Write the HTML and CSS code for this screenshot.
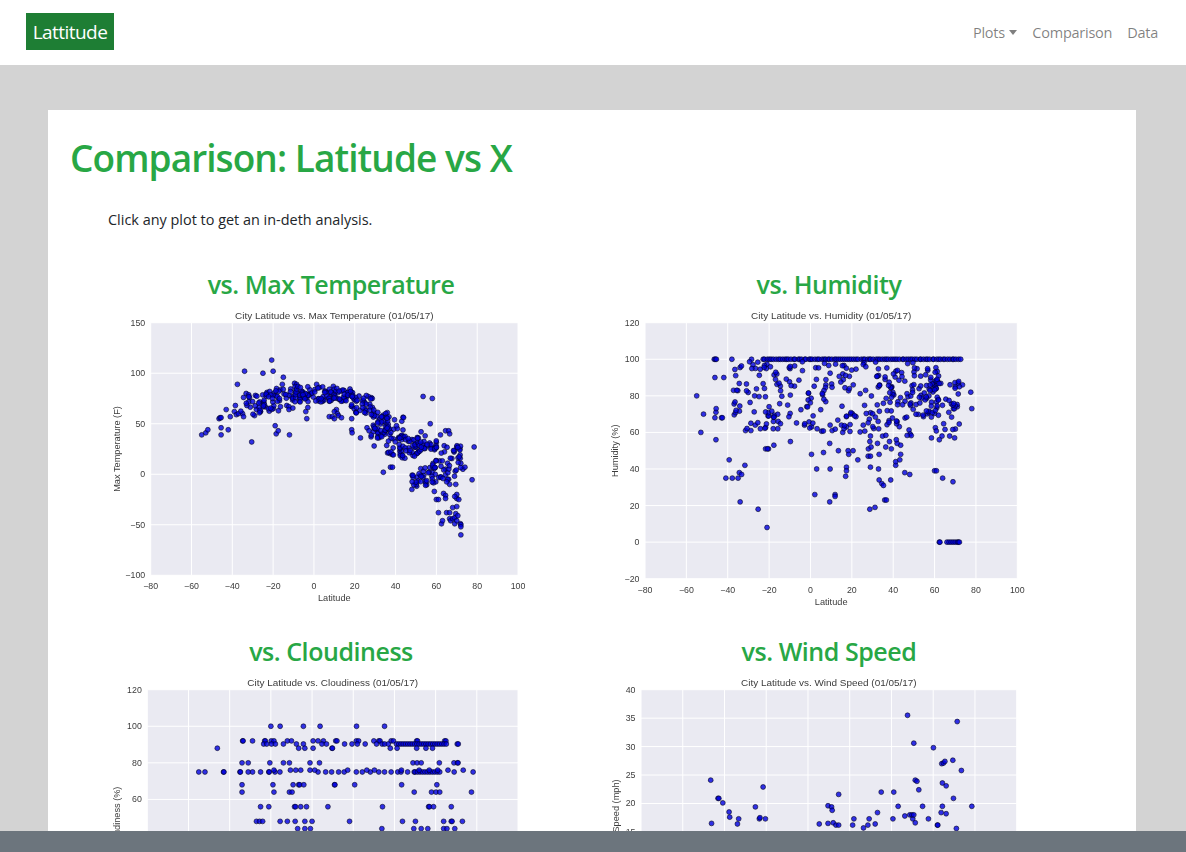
FILE: index.html
```html
<!DOCTYPE html>
<html lang="en">
<head>
    <meta charset="UTF-8">
    <meta name="viewport" content="width=device-width, initial-scale=1.0">
    <title>Lattitude</title>
    <link rel="stylesheet" href="styles.css">
</head>
<body>

<nav class="navbar">
    <a class="brand" href="#">Lattitude</a>
    <ul class="nav-links">
        <li><a href="#">Plots<span class="caret"></span></a></li>
        <li><a href="#">Comparison</a></li>
        <li><a href="#">Data</a></li>
    </ul>
</nav>

<main class="page">
    <div class="card">
        <h1>Comparison: Latitude vs X</h1>
        <p class="lead">Click any plot to get an in-deth analysis.</p>
        <div class="plots">
            <section class="plot-cell">
                <h2>vs. Max Temperature</h2>
                <svg class="plot" id="plotTemp" width="498" height="298"></svg>
            </section>
            <section class="plot-cell">
                <h2>vs. Humidity</h2>
                <svg class="plot" id="plotHumidity" width="498" height="298"></svg>
            </section>
            <section class="plot-cell">
                <h2>vs. Cloudiness</h2>
                <svg class="plot" id="plotCloud" width="498" height="298"></svg>
            </section>
            <section class="plot-cell">
                <h2>vs. Wind Speed</h2>
                <svg class="plot" id="plotWind" width="498" height="298"></svg>
            </section>
        </div>
    </div>
</main>

<footer class="footer"></footer>

<script src="plots.js"></script>
</body>
</html>
```

FILE: styles.css
```css
html, body {
    height: 100%;
}
body {
    margin: 0;
    height: 100vh;
    display: flex;
    flex-direction: column;
    overflow: hidden;
    background-color: #d3d3d3;
    font-family: "Open Sans", "Noto Sans", sans-serif;
    color: #212529;
}
.navbar {
    flex: none;
    height: 65px;
    display: flex;
    align-items: flex-start;
    justify-content: space-between;
    padding: 13px 28px 0 26px;
    box-sizing: border-box;
    background: white;
}
.brand {
    height: 37px;
    width: 88px;
    display: flex;
    align-items: center;
    justify-content: center;
    background-color: #1e7e34;
    color: white;
    font-size: 19px;
    letter-spacing: -0.55px;
    text-decoration: none;
}
.nav-links {
    display: flex;
    gap: 15px;
    list-style: none;
    margin: 0;
    padding: 0;
    height: 37px;
    align-items: center;
}
.nav-links a {
    color: rgba(0,0,0,0.5);
    font-size: 14.5px;
    letter-spacing: -0.25px;
    text-decoration: none;
}
.caret {
    display: inline-block;
    margin-left: 4.5px;
    vertical-align: 3px;
    border-top: 5px solid rgba(0,0,0,0.5);
    border-left: 4.5px solid transparent;
    border-right: 4.5px solid transparent;
}
.page {
    flex: 1;
    min-height: 0;
    overflow: hidden;
    padding: 45px 50px 0 48px;
}
.card {
    background: white;
    padding: 24px 0 0 0;
    min-height: 100%;
}
h1 {
    margin: 0 0 26px 22px;
    font-size: 37px;
    line-height: 48px;
    font-weight: 600;
    letter-spacing: -0.93px;
    color: #28a745;
}
.lead {
    margin: 0 0 36px 60px;
    font-size: 14.45px;
    line-height: 24px;
}
.plots {
    display: grid;
    grid-template-columns: 498px 498px;
    grid-auto-rows: 367px;
    margin-left: 34px;
}
.plot-cell {
    text-align: center;
}
h2 {
    margin: 0 0 8px 0;
    font-size: 25px;
    line-height: 32px;
    font-weight: 600;
    letter-spacing: -0.45px;
    color: #28a745;
}
.plot {
    display: block;
    filter: blur(0.4px);
    font-family: "Liberation Sans", Arial, sans-serif;
}
.plot .bg {
    fill: #eaeaf2;
}
.plot .grid {
    stroke: white;
    stroke-width: 1;
}
.plot .tick {
    font-size: 8.8px;
    fill: #3c3c3c;
}
.plot .title {
    font-size: 9.95px;
    fill: #3c3c3c;
    text-anchor: middle;
}
.plot .axis-label {
    font-size: 9.2px;
    fill: #3c3c3c;
    text-anchor: middle;
}
.plot .dot {
    fill: rgba(0,0,225,0.8);
    stroke: rgba(0,0,30,0.85);
    stroke-width: 0.7;
}
.footer {
    flex: none;
    height: 21px;
    background-color: #6c757d;
}
```

FILE: plots.js
```js
// small seeded random so the dense parts of the clouds always come out the same
let seed = 41;
function rnd(a, b) {
    seed = (seed * 1664525 + 1013904223) % 4294967296;
    return a + (seed / 4294967296) * (b - a);
}

function band(latMin, latMax, valMin, valMax, n) {
    let out = [];
    for (let i = 0; i < n; i++) {
        out.push([rnd(latMin, latMax), rnd(valMin, valMax)]);
    }
    return out;
}

function rows(list) {
    let out = [];
    list.forEach(r => r[1].forEach(lat => out.push([lat, r[0]])));
    return out;
}

function range(from, to, step) {
    let out = [];
    for (let v = from; v <= to + 0.001; v += step) out.push(v);
    return out;
}

const tempPoints = [
    [-55,39],[-53,41],[-52,44],[-46.5,55],[-46,56],[-45.5,56],[-45.5,46],[-45.5,39],[-43,64],[-42,44],[-41,57],[-39,62],
    [-38.5,68],[-38,59],[-37.5,89],[-37,60],[-35,60],[-34.5,76],[-34.5,57],[-34,102],[-20.7,113],[-25,100],[-20,102],
    [-15,96],[-15.5,89],[-9.5,90],[-8.5,89],[1.3,89],[9.5,87],[-30.5,32],[-19,48],[-18.5,40],[-17.5,43],[-12,39],
    [-3.5,55],[-3,66],[-4,62],[7.5,57],[9,57],[10,55],[11,64],[10,62],[11.5,60],[12,58],[13.5,56],[18.5,55],[18.5,44],
    [18.7,41],[22.8,36],[26,46],[27,43],[28,37],[29.5,28],[34,2],[37.5,7],[38.5,7],[48,-15],[53.5,77],[58,75],[57,50],
    [52.5,42],[54.5,38],[62,39],[64.5,43],[66,43],[66.5,40],[78.5,27],[77.5,-5.5],[73,5],[74,7],[59,-17],[60,-25],
    [61,-25],[61,-38],[62.5,-49],[63,-46],[63.5,-19],[64.5,-21],[64.5,-24],[65,-38],[66.5,-38],[66.5,-44],[67,-46],
    [68,-33],[68,-44],[69,-43],[69,-49],[69.5,-39],[70,-46],[70,-32],[70,-20],[69.5,-10],[70,-24],[71,-25],[70.5,-41],
    [71.8,-49],[72,-50],[72,-52],[72,-60],[69,-22],[66.5,-10],[66,-5],[70,27],[71.5,25],[71.5,24]
].concat(
    band(-36, -25, 58, 80, 24),
    band(-25, -10, 62, 85, 50),
    band(-10, 5, 70, 87, 56),
    band(5, 20, 72, 85, 52),
    band(18, 30, 60, 78, 38),
    band(28, 36, 34, 62, 44),
    band(35, 44, 18, 58, 46),
    band(42, 52, 15, 38, 36),
    band(50, 60, 22, 34, 22),
    band(48, 60, -12, 8, 36),
    band(58, 72, -8, 12, 24),
    band(59, 72, 12, 30, 22)
);

const topRow = range(-23, 73, 1.05).map(lat => [lat + rnd(-0.4, 0.4), 100]);

const humidityPoints = [
    [-55,80],[-53,60],[-51.7,70],[-46.5,100],[-46,100],[-45.5,100],[-38,100],[-28.5,100],[-46.2,68],[-45.7,71],[-45.6,73],
    [-46.2,90],[-45.7,56],[-41.9,90],[-43,68],[-42.6,68],[-39.3,45],[-40.9,35],[-37.8,35],[-35,35],[-34.4,38],[-33.3,37],
    [-34,22],[-31.7,42],[-25.3,18],[-21,8],[-31.4,61],[-28.8,61],[-28.8,65],[-26.7,64],[-21.7,51],[-20.3,51],[-20.8,51],
    [-17.7,53],[-9.7,55],[-20.5,69],[-20.2,69],[-17.9,66],[-15.6,66],[-18,62],[-15.8,62],[0.5,48],[3,40],[2.1,26],[6.3,49],
    [9.5,40],[9.3,22],[11.9,26],[11.9,25],[13.5,50],[17,36],[17.4,41],[17.4,39],[18.2,50],[18.5,48],[20.6,50],[22.9,45],
    [9.3,54],[3.2,62],[9.5,64],[10.5,61],[15,64],[15.6,60],[17.4,63],[28.7,18],[31.2,19],[29,41],[32.9,40],[33.2,34],
    [34.5,32],[35.3,31],[35.9,23],[36.7,23],[38.8,34],[41.2,42],[41.2,44],[43.2,45],[43.6,48],[43.6,53],[45.6,38],[48,37],
    [27.9,47],[29,47],[28,51],[29.3,52],[28.7,55],[29,58],[32.4,54],[33.2,48],[36.4,52],[38.2,55],[39.1,51],[41.9,54],
    [41.5,56],[60,39],[60.9,39],[63.9,35],[68.9,33],[63.6,58],[62.3,56],[67.3,58],[69.7,57],[58.5,57],[77.5,82],[78,73],
    [73.5,86],[70,85],[72,85],[71,74],[62.3,0],[62.6,0],[66,0],[67,0],[68,0],[69,0],[70,0],[71,0],[71.5,0],[72,0]
].concat(
    topRow,
    band(-38, -20, 62, 99, 46),
    band(-20, 10, 60, 99, 66),
    band(10, 30, 60, 99, 46),
    band(30, 50, 56, 99, 70),
    band(48, 62, 68, 96, 66),
    band(60, 72, 60, 92, 34)
);

const denseNinety = range(41, 66, 1.1);
const denseSeventyFive = range(50, 63, 1.2);

const cloudPoints = rows([
    [100, [-20,-15.5,-4.2,3.9,21.6,35.2]],
    [92, [-33.7,-33.5,-28.9,-23,-22.7,-19.8,-18.5,-12,-10,0.5,2.9,5.5,11.5,12.1,21.5,22.6,30,32.4,33,38.4,39.5,50.8,51.2,64.4,65]],
    [90.3, [-23.5,-22,-19.7,-17.8,-13.9,-7.6,-4.2,4.8,7,15.8,19.4,22,25.8,31.3,34,35.2,37,70.5,71].concat(denseNinety)],
    [88, [-46,-6.5,-3.5,0.5,9.7,9.9,38,41.3,50.8,55.3,58.5]],
    [80, [-34,-31,-20.5,-13.9,-11,-1,3.6,49,51,53,61.8,68.9,70.6,70.9]],
    [75, [-55,-52,-43,-42.8,-35,-34.8,-31,-28.9,-25,-21,-20.8,-18,-15.6,2.9,6.6,9.5,12.9,15.6,21.5,24.4,28.3,32.4,35.2,38.4,41.6,43.2,46.4,49.6,69,78.2].concat(denseSeventyFive)],
    [76, [-18.5,-10.5,-7.9,-5.5,-1,1.3,17.3,26.6,30.3,43.4,52,56.9,61,66,73.4]],
    [68, [-34,-19,-9.2,-6.5,-6,-4,10.9,11.1,20.7,43.5,60.6]],
    [64, [-34,-18.5,-11,-9.7,49.6,58,60.2,62,77.4]],
    [56, [-25,-21,-8.5,-8,-5.5,-2.7,7.7,34.2,56.6,57,59,67.6]],
    [48, [-27,-25.5,-24,-15.5,-12,-8.2,-3.5,0,18.2,43.9,50.2,63.9,67.6,68,73]],
    [44, [-7,-3.5,-0.8,33.9,49.4,53,56.2,63.9,65.5,69.3]]
]);

const windPoints = [
    [-46.6,24.1],[-46.2,16.5],[-43.1,20.9],[-42.7,20.9],[-40.8,20.1],[-37.8,18.5],[-37.5,17.6],[-33.8,16.4],[-33.2,17.3],
    [-25.2,19.4],[-23.3,17.3],[-23,17.5],[-21.5,22.9],[-20.4,17.3],[5.4,16.4],[9.6,19.6],[9.6,16.5],[11.3,19.4],[11.6,18.8],
    [12.1,16.6],[13.4,16.2],[14.7,21.6],[14.7,16.2],[21.4,16.2],[22,17.3],[26.6,15.7],[28.7,16.2],[29.3,17.3],[32.2,16.4],
    [33.3,18.4],[35.1,22],[40.7,17.3],[41.1,22],[43.2,19.5],[46.4,17.8],[47.7,35.5],[48.8,18],[50.2,17.3],[49.8,18],[50.7,30.6],
    [50.7,18],[51.4,24.1],[51.4,16.6],[52.2,23.9],[53.1,22.4],[54.9,19.5],[57.7,17.3],[60.1,29.8],[62,16.2],[62.2,16.2],[63.8,18.4],
    [64.1,27],[64.4,23.6],[64.4,19.5],[64.9,27.1],[65.6,27.4],[66.2,23.1],[66.2,18.2],[69.4,27.6],[69.7,20.9],[71.1,15.6],
    [71.5,34.4],[73.5,25.8],[78.5,19.5]
];

const plots = [
    { id: 'plotTemp', title: 'City Latitude vs. Max Temperature (01/05/17)', yLabel: 'Max Temperature (F)',
      x: 68.7, y: 14.7, w: 367.3, h: 252.6, yMin: -100, yMax: 150, yStep: 50, labelX: 34.7, points: tempPoints },
    { id: 'plotHumidity', title: 'City Latitude vs. Humidity (01/05/17)', yLabel: 'Humidity (%)',
      x: 65, y: 14.7, w: 372.3, h: 256, yMin: -20, yMax: 120, yStep: 20, labelX: 35, points: humidityPoints },
    { id: 'plotCloud', title: 'City Latitude vs. Cloudiness (01/05/17)', yLabel: 'Cloudiness (%)',
      x: 65.3, y: 14.7, w: 370.7, h: 256, yMin: -20, yMax: 120, yStep: 20, labelX: 35.3, points: cloudPoints },
    { id: 'plotWind', title: 'City Latitude vs. Wind Speed (01/05/17)', yLabel: 'Wind Speed (mph)',
      x: 61, y: 14.7, w: 375.7, h: 256, yMin: -5, yMax: 40, yStep: 5, labelX: 35.7, points: windPoints }
];

function el(svg, name, attrs, text) {
    let node = document.createElementNS('http://www.w3.org/2000/svg', name);
    for (let key in attrs) node.setAttribute(key, attrs[key]);
    if (text !== undefined) node.textContent = text;
    svg.appendChild(node);
    return node;
}

function tickText(v) {
    return v < 0 ? '\u2212' + Math.abs(v) : String(v);
}

function drawPlot(p) {
    let svg = document.getElementById(p.id);
    let sx = lat => p.x + (lat + 80) / 180 * p.w;
    let sy = val => p.y + (p.yMax - val) / (p.yMax - p.yMin) * p.h;

    el(svg, 'rect', { class: 'bg', x: p.x, y: p.y, width: p.w, height: p.h });

    range(-80, 100, 20).forEach(lat => {
        el(svg, 'line', { class: 'grid', x1: sx(lat), x2: sx(lat), y1: p.y, y2: p.y + p.h });
        el(svg, 'text', { class: 'tick', x: sx(lat), y: p.y + p.h + 14, 'text-anchor': 'middle' }, tickText(lat));
    });
    range(p.yMin, p.yMax, p.yStep).forEach(val => {
        el(svg, 'line', { class: 'grid', x1: p.x, x2: p.x + p.w, y1: sy(val), y2: sy(val) });
        el(svg, 'text', { class: 'tick', x: p.x - 5.5, y: sy(val) + 3, 'text-anchor': 'end' }, tickText(val));
    });

    el(svg, 'text', { class: 'title', x: p.x + p.w / 2, y: p.y - 4 }, p.title);
    el(svg, 'text', { class: 'axis-label', x: p.x + p.w / 2, y: p.y + p.h + 26 }, 'Latitude');
    let midY = p.y + p.h / 2;
    el(svg, 'text', { class: 'axis-label', x: p.labelX + 3, y: midY, transform: `rotate(-90 ${p.labelX + 3} ${midY})` }, p.yLabel);

    p.points.forEach(pt => {
        el(svg, 'circle', { class: 'dot', cx: sx(pt[0]), cy: sy(pt[1]), r: 2.45 });
    });
}

plots.forEach(drawPlot);
```
